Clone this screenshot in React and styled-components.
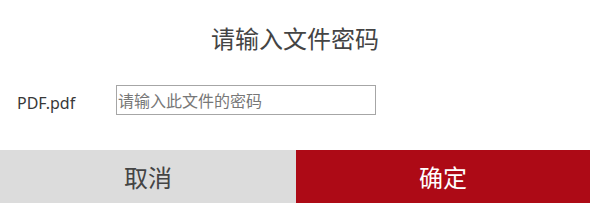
import React from "react";
import styled, { createGlobalStyle } from "styled-components";

const Global = createGlobalStyle`
  html, body { margin: 0; padding: 0; background: #fff; }
  body { font-family: "Noto Sans", "Noto Sans CJK SC", sans-serif; }
`;

const Dialog = styled.div`
  width: 590px;
  height: 203px;
  display: flex;
  flex-direction: column;
  background: #fff;
`;

const Title = styled.h2`
  margin: 0;
  padding-top: 20px;
  height: 36px;
  line-height: 36px;
  font-size: 24px;
  font-weight: 400;
  color: #444;
  text-align: center;
  font-family: "Noto Sans CJK SC", sans-serif;
`;

const Row = styled.div`
  display: flex;
  align-items: center;
  margin-top: 29px;
  height: 30px;
`;

const Label = styled.label`
  flex: none;
  width: 116px;
  padding-left: 17px;
  box-sizing: border-box;
  font-size: 16px;
  color: #383838;
  padding-top: 6px;
`;

const Input = styled.input`
  flex: none;
  width: 260px;
  height: 30px;
  box-sizing: border-box;
  border: 1px solid #a6a6a6;
  padding: 0 1px;
  font-size: 16px;
  font-family: "Noto Sans CJK SC", sans-serif;
  outline: none;
  &::placeholder { color: #777; }
`;

const Footer = styled.div`
  margin-top: auto;
  height: 53px;
  display: grid;
  grid-template-columns: 296px 1fr;
`;

const Button = styled.button`
  border: none;
  margin: 0;
  font-size: 24px;
  font-family: "Noto Sans CJK SC", sans-serif;
  background: ${(p) => (p.$primary ? "#ad0a16" : "#dcdcdc")};
  color: ${(p) => (p.$primary ? "#fff" : "#444")};
  cursor: pointer;
  padding: 0;
`;

export default function App() {
  return (
    <>
      <Global />
      <Dialog>
        <Title>请输入文件密码</Title>
        <Row>
          <Label>PDF.pdf</Label>
          <Input type="password" placeholder="请输入此文件的密码" />
        </Row>
        <Footer>
          <Button>取消</Button>
          <Button $primary>确定</Button>
        </Footer>
      </Dialog>
    </>
  );
}
